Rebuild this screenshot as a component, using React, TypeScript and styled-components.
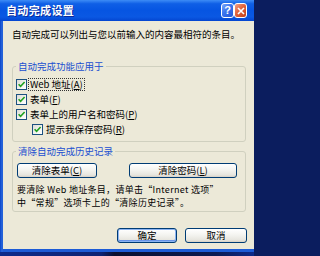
import React from "react";
import styled, { createGlobalStyle } from "styled-components";

const FONT = `"Noto Sans CJK SC", "Noto Sans", sans-serif`;

const Global = createGlobalStyle`
  html, body { margin: 0; padding: 0; width: 254px; height: 256px; overflow: hidden; background: #0b1d5e; }
  #root { width: 254px; height: 256px; }
  * { box-sizing: border-box; }
`;

const Screen = styled.div`
  width: 254px;
  height: 256px;
  display: flex;
  flex-direction: column;
  font-family: ${FONT};
  overflow: hidden;
`;

const Frame = styled.div`
  flex: 1;
  display: flex;
  flex-direction: column;
  background: linear-gradient(90deg, #0a44c8 0px, #2a68dc 2px, #1c5bd6 3px);
  min-height: 0;
`;

const Strip = styled.div`
  height: 4px;
  flex: none;
  background: linear-gradient(90deg, #0d2a8a 0%, #0d2272 40%, #0a0f2e 45%, #0c1a52 85%, #0d2a8a 100%);
`;

const TitleBar = styled.div`
  height: 21px;
  flex: none;
  display: flex;
  align-items: center;
  padding: 0 7px 0 6px;
  background: linear-gradient(180deg, #3d8cf6 0%, #0f5fe6 18%, #0655e2 50%, #0a58e3 80%, #0445d0 100%);
`;

const Title = styled.div`
  flex: 1;
  color: #fff;
  font-weight: bold;
  font-size: 11px;
  letter-spacing: 0.35px;
  line-height: 13px;
  text-shadow: 1px 1px 0 #0a2a9a;
`;

const CaptionButton = styled.div<{ $variant: "help" | "close" }>`
  width: 13px;
  height: 15px;
  border: 1px solid #fff;
  border-radius: 3px;
  display: flex;
  align-items: center;
  justify-content: center;
  color: #fff;
  font-family: "Liberation Sans", sans-serif;
  font-weight: bold;
  font-size: 11px;
  line-height: 1;
  background: ${(p) =>
    p.$variant === "help"
      ? "linear-gradient(135deg, #7aa8fb 0%, #3a74ee 45%, #2257d8 100%)"
      : "linear-gradient(135deg, #f0a086 0%, #e2643c 45%, #c0401a 100%)"};
`;

const Buttons = styled.div`
  display: flex;
  gap: 0;
`;

const Body = styled.div`
  flex: 1;
  margin: 0 0 3px 3px;
  padding: 7px 8px 0 9px;
  background: #ece9d8;
  display: flex;
  flex-direction: column;
  color: #000;
  font-size: 9.5px;
`;

const Description = styled.p`
  margin: 0;
  line-height: 12px;
  font-size: 9.5px;
  white-space: nowrap;
`;

const Group = styled.fieldset<{ $top: number; $padTop: number; $padBottom: number }>`
  margin: ${(p) => p.$top}px 0 0 0;
  border: 1px solid #d0d0bf;
  border-radius: 3px;
  padding: ${(p) => p.$padTop}px 3px ${(p) => p.$padBottom}px 3px;
  min-width: 0;
`;

const Legend = styled.legend`
  padding: 0 2px;
  margin-left: 0;
  color: #1a4fd0;
  font-size: 9.5px;
  line-height: 10px;
`;

const CheckRow = styled.label<{ $indent?: number }>`
  display: flex;
  align-items: center;
  gap: 2px;
  height: 15px;
  margin-left: ${(p) => p.$indent || 0}px;
  font-size: 9.5px;
  line-height: 12px;
  white-space: nowrap;
`;

const Box = styled.span`
  width: 11px;
  height: 11px;
  flex: none;
  border: 1px solid #1c5180;
  background: linear-gradient(135deg, #dcdcd6 0%, #f4f4f0 60%, #ffffff 100%);
  display: flex;
  align-items: center;
  justify-content: center;
`;

const LabelText = styled.span<{ $focus?: boolean }>`
  padding: 0 1px;
  outline: ${(p) => (p.$focus ? "1px dotted #333" : "none")};
  line-height: 11px;
`;

const PushRow = styled.div`
  display: flex;
  gap: 32px;
  padding-left: 1px;
`;

const PushButton = styled.button<{ $w: number; $default?: boolean }>`
  width: ${(p) => p.$w}px;
  height: 15px;
  padding: 0;
  font-family: ${FONT};
  font-size: 9.5px;
  line-height: 13px;
  color: #000;
  border: 1px solid #003c74;
  border-radius: 3px;
  background: linear-gradient(180deg, #ffffff 0%, #f4f4f0 45%, #e6e5de 85%, #d6d0c5 100%);
  box-shadow: ${(p) =>
    p.$default ? "inset 0 0 0 1px #8cb4f2, inset 0 -1px 0 1px #6a94e8" : "none"};
  display: flex;
  align-items: center;
  justify-content: center;
`;

const Note = styled.p`
  margin: 5px 0 0 0;
  padding-left: 1px;
  font-size: 9px;
  letter-spacing: 0.3px;
  line-height: 13px;
  white-space: nowrap;
`;

const Footer = styled.div`
  margin: 16px -1px 0 0;
  display: flex;
  justify-content: flex-end;
  gap: 8px;
`;

const Check = () => (
  <Box>
    <svg width="9" height="9" viewBox="0 0 9 9">
      <path d="M1.6 4.2 L3.6 6.3 L7.6 2.0" fill="none" stroke="#21a121" strokeWidth="1.6" />
    </svg>
  </Box>
);

const Key = ({ k }: { k: string }) => (
  <>
    (<u>{k}</u>)
  </>
);

export default function App() {
  return (
    <Screen lang="zh-CN">
      <Global />
      <Frame>
        <TitleBar>
          <Title>自动完成设置</Title>
          <Buttons>
            <CaptionButton $variant="help">?</CaptionButton>
            <CaptionButton $variant="close">
              <svg width="8" height="8" viewBox="0 0 8 8">
                <path d="M1 1 L7 7 M7 1 L1 7" stroke="#fff" strokeWidth="1.6" />
              </svg>
            </CaptionButton>
          </Buttons>
        </TitleBar>
        <Body>
          <Description>自动完成可以列出与您以前输入的内容最相符的条目。</Description>
          <Group $top={21} $padTop={6} $padBottom={4}>
            <Legend>自动完成功能应用于</Legend>
            <CheckRow>
              <Check />
              <LabelText $focus>
                Web 地址<Key k="A" />
              </LabelText>
            </CheckRow>
            <CheckRow>
              <Check />
              <LabelText>
                表单<Key k="F" />
              </LabelText>
            </CheckRow>
            <CheckRow>
              <Check />
              <LabelText>
                表单上的用户名和密码<Key k="P" />
              </LabelText>
            </CheckRow>
            <CheckRow $indent={16}>
              <Check />
              <LabelText>
                提示我保存密码<Key k="R" />
              </LabelText>
            </CheckRow>
          </Group>
          <Group $top={4} $padTop={7} $padBottom={2}>
            <Legend>清除自动完成历史记录</Legend>
            <PushRow>
              <PushButton $w={80}>
                清除表单<Key k="C" />
              </PushButton>
              <PushButton $w={108}>
                清除密码<Key k="L" />
              </PushButton>
            </PushRow>
            <Note>
              要清除 Web 地址条目，请单击“Internet 选项”
              <br />
              中“常规”选项卡上的“清除历史记录”。
            </Note>
          </Group>
          <Footer>
            <PushButton $w={60} $default>
              确定
            </PushButton>
            <PushButton $w={62}>取消</PushButton>
          </Footer>
        </Body>
      </Frame>
      <Strip />
    </Screen>
  );
}
